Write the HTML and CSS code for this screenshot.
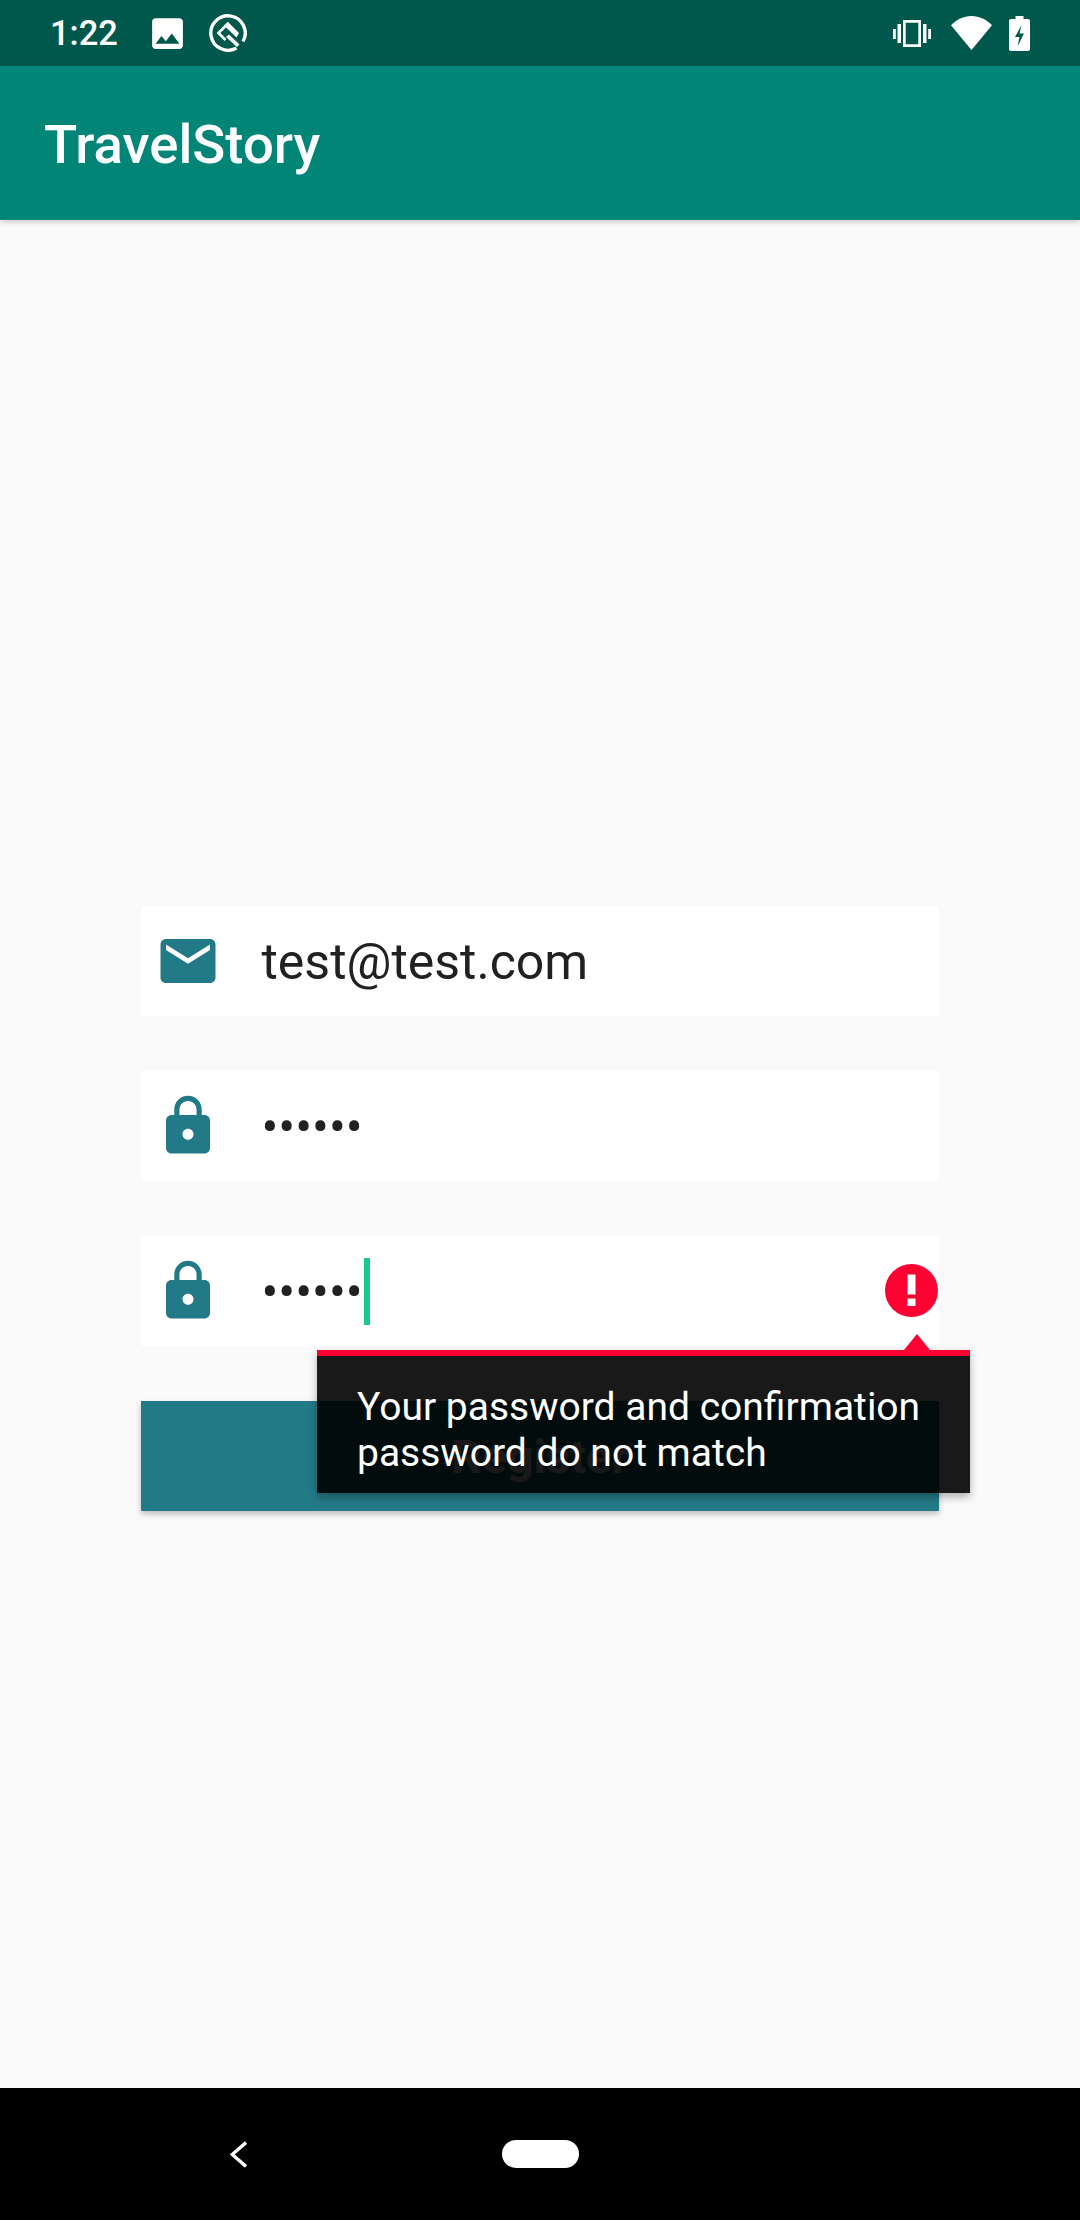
FILE: index.html
```html
<!DOCTYPE html>
<html lang="en">
<head>
  <meta charset="UTF-8" />
  <title>TravelStory</title>
  <link rel="stylesheet" href="styles.css">
</head>
<body>
  <div class="screen">
    <div class="status-bar">
      <span class="clock">1:22</span>
      <svg class="icon-image" viewBox="0 0 24 24"><path fill="#fff" d="M21 19V5c0-1.1-.9-2-2-2H5c-1.1 0-2 .9-2 2v14c0 1.1.9 2 2 2h14c1.1 0 2-.9 2-2zM8.5 13.5l2.5 3.01L14.5 12l4.5 6H5l3.5-4.5z"/></svg>
      <svg class="icon-q" viewBox="0 0 38 38">
        <path fill="none" stroke="#fff" stroke-width="3.4" d="M27.500 34A17.200 17.200 0 1 1 34 27.500"/>
        <path fill="#fff" d="M19 8 30 19l-2.500 4.500L15 11.500z"/>
        <path fill="none" stroke="#fff" stroke-width="2.600" d="M19.500 9 9.500 19l7 7"/>
        <path fill="#fff" d="M20 20.500l10.500 10-2.500 2.500L17 23z"/>
      </svg>
      <div class="status-right">
        <svg class="icon-vibrate" viewBox="0 0 38 27">
          <path fill="none" stroke="#fff" stroke-width="2.700" d="M11.350 1.350h15.300v24.300H11.350z"/>
          <path fill="#fff" d="M4.500 4h3.500v19H4.500zM30 4h3.500v19H30zM0 9h2.800v10H0zM35.200 9H38v10h-2.800z"/>
        </svg>
        <svg class="icon-wifi" viewBox="0 0 41 34"><path fill="#fff" d="M20.500 34 0 9.300C5.500 3.600 12.600 0 20.500 0S35.500 3.600 41 9.300z"/></svg>
        <svg class="icon-battery" viewBox="0 0 21 35"><path fill="#fff" d="M6.500 0h8v3H19c1.100 0 2 .9 2 2v28c0 1.100-.9 2-2 2H2c-1.100 0-2-.9-2-2V5c0-1.100.9-2 2-2h4.500zM12.500 9 6 21h4.500l-2 9.500L15 17.500h-4.500z" fill-rule="evenodd"/></svg>
      </div>
    </div>

    <div class="app-bar">TravelStory</div>

    <div class="content">
      <div class="field">
        <svg class="field-icon" viewBox="0 0 24 24"><path d="M20 4H4c-1.100 0-1.990.9-1.990 2L2 18c0 1.100.9 2 2 2h16c1.100 0 2-.9 2-2V6c0-1.100-.9-2-2-2zm0 4l-8 5-8-5V6l8 5 8-5v2z"/></svg>
        <span class="field-text">test@test.com</span>
      </div>

      <div class="field">
        <svg class="field-icon" viewBox="0 0 24 24"><path d="M18 8h-1V6c0-2.760-2.240-5-5-5S7 3.240 7 6v2H6c-1.100 0-2 .9-2 2v10c0 1.100.9 2 2 2h12c1.100 0 2-.9 2-2V10c0-1.100-.9-2-2-2zm-6 9c-1.100 0-2-.9-2-2s.9-2 2-2 2 .9 2 2-.9 2-2 2zm3.100-9H8.900V6c0-1.710 1.390-3.100 3.100-3.100 1.710 0 3.100 1.390 3.100 3.100v2z"/></svg>
        <span class="field-text">••••••</span>
      </div>

      <div class="field">
        <svg class="field-icon" viewBox="0 0 24 24"><path d="M18 8h-1V6c0-2.760-2.240-5-5-5S7 3.240 7 6v2H6c-1.100 0-2 .9-2 2v10c0 1.100.9 2 2 2h12c1.100 0 2-.9 2-2V10c0-1.100-.9-2-2-2zm-6 9c-1.100 0-2-.9-2-2s.9-2 2-2 2 .9 2 2-.9 2-2 2zm3.100-9H8.900V6c0-1.710 1.390-3.100 3.100-3.100 1.710 0 3.100 1.390 3.100 3.100v2z"/></svg>
        <span class="field-text">••••••</span>
        <span class="cursor"></span>
        <svg class="error-icon" viewBox="0 0 53 53">
          <circle cx="26.500" cy="26.500" r="26.500" fill="#ff0033"/>
          <path fill="#fff" d="M22.500 10.500h8v20h-8zM22.500 34.500h8v7.500h-8z"/>
        </svg>
        <div class="tooltip">
          <span class="tooltip-arrow"></span>
          Your password and confirmation<br>password do not match
        </div>
      </div>

      <button class="register-btn">Register</button>
    </div>

    <div class="nav-bar">
      <svg class="nav-back" viewBox="0 0 17 27"><path fill="none" stroke="#fff" stroke-width="3.400" d="M16 1.500 2.200 13.500 16 25.500"/></svg>
      <span class="nav-home"></span>
    </div>
  </div>
</body>
</html>
```

FILE: styles.css
```css
:root {
  --primary: #008577;
  --primary-dark: #00574b;
  --teal: #237a87;
  --error: #ff0033;
  --text: #212121;
}

* {
  box-sizing: border-box;
}

body {
  margin: 0;
  font-family: Roboto, sans-serif;
  background-color: #fafafa;
  color: var(--text);
}

.screen {
  display: flex;
  flex-direction: column;
  width: 1080px;
  height: 2220px;
  overflow: hidden;
}

/* status bar */
.status-bar {
  display: flex;
  align-items: center;
  flex: 0 0 66px;
  padding-left: 50px;
  background-color: var(--primary-dark);
  color: white;
}

.clock {
  width: 97px;
  font-size: 34.5px;
  font-weight: 500;
}

.icon-image {
  width: 41px;
  height: 41px;
}

.icon-q {
  width: 38px;
  height: 38px;
  margin-left: 21px;
}

.status-right {
  display: flex;
  align-items: center;
  margin-left: auto;
  padding-right: 50px;
}

.icon-vibrate {
  width: 38px;
  height: 27px;
}

.icon-wifi {
  width: 41px;
  height: 34px;
  margin-left: 20px;
}

.icon-battery {
  width: 21px;
  height: 35px;
  margin-left: 17px;
}

/* app bar */
.app-bar {
  position: relative;
  flex: 0 0 154px;
  padding: 3px 0 0 44px;
  background-color: var(--primary);
  color: white;
  font-size: 54.5px;
  font-weight: 500;
  line-height: 151px;
  box-shadow: 0 2px 6px rgba(0,0,0,0.2);
}

/* form */
.content {
  display: flex;
  flex: 1;
  flex-direction: column;
  gap: 55px;
  padding: 686px 141px 0;
}

.field {
  position: relative;
  display: flex;
  align-items: center;
  height: 110px;
  padding-left: 13.5px;
  background: white;
}

.field-icon {
  flex: none;
  width: 66px;
  height: 66px;
  fill: var(--teal);
}

.field-text {
  margin: 2px 0 0 41px;
  font-size: 50px;
}

.cursor {
  width: 6px;
  height: 67px;
  margin-left: 1px;
  background-color: #1cc98c;
}

.error-icon {
  position: absolute;
  top: 27.5px;
  right: 1.500px;
  width: 53px;
  height: 53px;
}

.tooltip {
  position: absolute;
  top: 114px;
  left: 176px;
  z-index: 2;
  width: 653px;
  height: 143px;
  padding: 28px 40px 0;
  border-top: 6px solid var(--error);
  background: rgba(0,0,0,0.9);
  color: white;
  font-size: 39px;
  line-height: 46px;
  box-shadow: 0 4px 8px rgba(0,0,0,0.3);
}

.tooltip-arrow {
  position: absolute;
  top: -22px;
  right: 40px;
  border-right: 13px solid transparent;
  border-bottom: 16px solid var(--error);
  border-left: 13px solid transparent;
}

.register-btn {
  height: 110px;
  border: none;
  padding-top: 2px;
  background-color: var(--teal);
  color: white;
  font-family: inherit;
  font-size: 47px;
  font-weight: 700;
  box-shadow: 0 3px 6px rgba(0,0,0,0.25);
}

/* nav bar */
.nav-bar {
  position: relative;
  display: flex;
  align-items: center;
  flex: 0 0 132px;
  padding-left: 230px;
  background: black;
}

.nav-back {
  width: 17px;
  height: 27px;
}

.nav-home {
  width: 77px;
  height: 28px;
  margin-left: 255px;
  border-radius: 14px;
  background: white;
}
```
